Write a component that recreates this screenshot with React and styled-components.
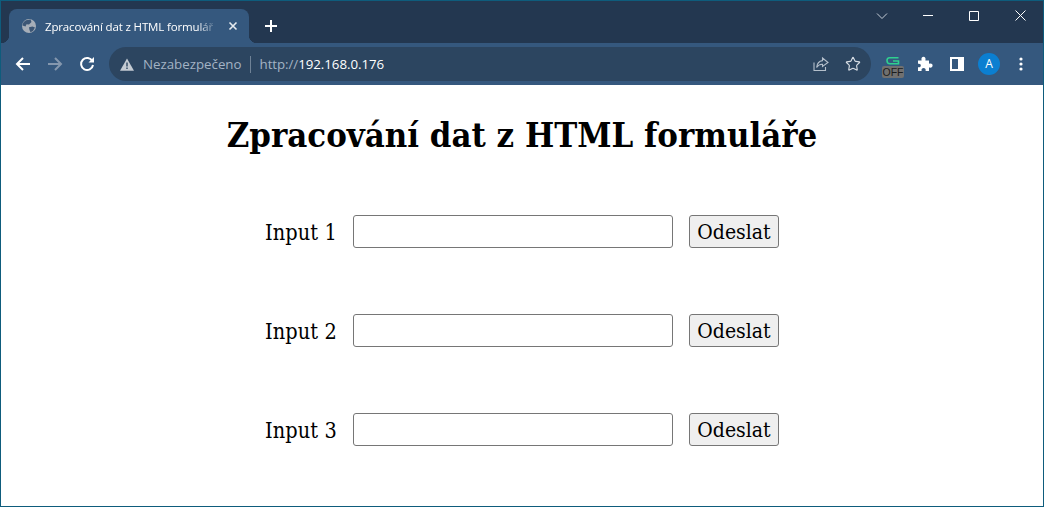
import React from "react";
import styled, { createGlobalStyle } from "styled-components";
import { Star } from "lucide-react";

const GlobalStyle = createGlobalStyle`
  html, body {
    margin: 0;
    padding: 0;
    background: #fff;
  }
`;

const Frame = styled.div`
  box-sizing: border-box;
  width: 1044px;
  height: 507px;
  border: 1px solid #0e5c7c;
  display: flex;
  flex-direction: column;
  overflow: hidden;
`;

const TitleBar = styled.div`
  height: 42px;
  flex: none;
  background: #233750;
  display: flex;
  align-items: flex-start;
  padding-left: 8px;
`;

const Tab = styled.div`
  position: relative;
  box-sizing: border-box;
  width: 240px;
  height: 34px;
  margin-top: 8px;
  background: #35587e;
  border-radius: 8px 8px 0 0;
  display: flex;
  align-items: center;
  padding: 0 9px 0 12px;
  gap: 8px;
  font-family: "Open Sans", "Noto Sans", sans-serif;
  font-size: 11.5px;
  letter-spacing: -0.15px;
  color: #fff;

  &::before,
  &::after {
    content: "";
    position: absolute;
    bottom: 0;
    width: 8px;
    height: 8px;
  }
  &::before {
    left: -8px;
    background: radial-gradient(circle at 0 0, #233750 8px, #35587e 8.5px);
  }
  &::after {
    right: -8px;
    background: radial-gradient(circle at 100% 0, #233750 8px, #35587e 8.5px);
  }
`;

const TabTitle = styled.span`
  flex: 1;
  min-width: 0;
  white-space: nowrap;
  overflow: hidden;
  -webkit-mask-image: linear-gradient(to right, #000 88%, transparent 100%);
  mask-image: linear-gradient(to right, #000 88%, transparent 100%);
`;

const NewTab = styled.div`
  width: 28px;
  height: 28px;
  margin: 11px 0 0 8px;
  display: flex;
  align-items: center;
  justify-content: center;
`;

const WindowControls = styled.div`
  margin-left: auto;
  display: flex;
`;

const WindowButton = styled.div`
  width: 46px;
  height: 29px;
  display: flex;
  align-items: center;
  justify-content: center;
`;

const Toolbar = styled.div`
  height: 42px;
  flex: none;
  background: #35587e;
  display: flex;
  align-items: center;
  padding: 0 6px;
  gap: 6px;
`;

const IconGroup = styled.div`
  display: flex;
  align-items: center;
`;

const IconButton = styled.div`
  position: relative;
  width: 32px;
  height: 32px;
  display: flex;
  align-items: center;
  justify-content: center;
`;

const Omnibox = styled.div`
  flex: 1;
  height: 34px;
  border-radius: 17px;
  background: #2c4560;
  display: flex;
  align-items: center;
  padding: 0 2px 0 11px;
  font-family: "Open Sans", "Noto Sans", sans-serif;
  font-size: 13.3px;
`;

const SecurityLabel = styled.span`
  color: #a3b3c4;
  margin-left: 9px;
  padding-right: 8px;
  border-right: 1px solid #6f8296;
  line-height: 17px;
`;

const Url = styled.span`
  margin-left: 9px;
  flex: 1;
  color: #fff;
  letter-spacing: -0.05px;
`;

const UrlScheme = styled.span`
  color: #a3b3c4;
`;

const GrammarlyMark = styled.svg`
  margin-top: -6px;
`;

const OffBadge = styled.span`
  position: absolute;
  left: 5px;
  top: 18px;
  width: 22px;
  height: 12px;
  border-radius: 2px;
  background: #707070;
  color: #1c1c1c;
  font-family: "Liberation Sans", sans-serif;
  font-size: 10.5px;
  line-height: 12px;
  text-align: center;
`;

const Avatar = styled.div`
  width: 22px;
  height: 22px;
  border-radius: 50%;
  background: #0b7fd1;
  color: #fff;
  font-family: "Open Sans", sans-serif;
  font-size: 12px;
  line-height: 22px;
  text-align: center;
`;

const Page = styled.main`
  flex: 1;
  background: #fff;
  color: #000;
  font-family: "DejaVu Serif", "Liberation Serif", serif;
  font-stretch: condensed;
`;

const Heading = styled.h1`
  margin: 0;
  height: 130px;
  box-sizing: border-box;
  padding-top: 29px;
  text-align: center;
  font-size: 34.4px;
  line-height: 42px;
  font-weight: 700;
`;

const Form = styled.form`
  display: flex;
  flex-direction: column;
  gap: 66px;
`;

const Row = styled.div`
  display: flex;
  justify-content: center;
  align-items: center;
  height: 33px;
`;

const Label = styled.label`
  width: 71px;
  margin-right: 17px;
  padding-top: 2px;
  font-size: 21.5px;
  letter-spacing: 0.1px;
  white-space: nowrap;
`;

const TextInput = styled.input`
  box-sizing: border-box;
  width: 320px;
  height: 33px;
  margin: 0 16px 0 0;
  border: 1px solid #767676;
  border-radius: 3px;
  background: #fff;
`;

const SubmitButton = styled.button`
  box-sizing: border-box;
  width: 90px;
  height: 33px;
  padding: 2px 0 0;
  border: 1px solid #767676;
  border-radius: 3px;
  background: #efefef;
  color: #000;
  font-family: "DejaVu Serif", "Liberation Serif", serif;
  font-stretch: condensed;
  font-size: 21px;
  line-height: 1;
`;

const Globe = () => (
  <svg width="16" height="16" viewBox="0 0 16 16">
    <circle cx="8" cy="8" r="7" fill="#a6aeb8" />
    <path d="M5 2.2 9.5 1.6 10.5 4 8 6.5 5.5 6.2 4.5 8.5 1.5 7.5C1.8 5 3 3.2 5 2.2Z" fill="#3c5675" />
    <path d="M8 9.2 11.5 8.5 14 9.5 12 13 9.5 14.3 8.5 12Z" fill="#3c5675" />
  </svg>
);

const Line = ({ d, w = 16, h = 16, color = "#fff", sw = 1.5 }) => (
  <svg width={w} height={h} viewBox={`0 0 ${w} ${h}`} fill="none" stroke={color} strokeWidth={sw}>
    <path d={d} />
  </svg>
);

const App = () => {
  const rows = ["Input 1", "Input 2", "Input 3"];
  return (
    <Frame>
      <GlobalStyle />
      <TitleBar>
        <Tab>
          <Globe />
          <TabTitle>Zpracování dat z HTML formulář</TabTitle>
          <Line d="M3.5 3.5 10.5 10.5M10.5 3.5 3.5 10.5" w={14} h={14} color="#e6ebf0" sw={1.6} />
        </Tab>
        <NewTab>
          <Line d="M7 1V13M1 7H13" w={14} h={14} sw={2} />
        </NewTab>
        <WindowControls>
          <WindowButton>
            <Line d="M1 1.5 6 6.5 11 1.5" w={12} h={8} color="#c6ced8" sw={1} />
          </WindowButton>
          <WindowButton>
            <Line d="M0 .5H10" w={10} h={1} sw={1} />
          </WindowButton>
          <WindowButton>
            <Line d="M.5.5H9.5V9.5H.5Z" w={10} h={10} sw={1} />
          </WindowButton>
          <WindowButton>
            <Line d="M.5.5 10.5 10.5M10.5.5 .5 10.5" w={11} h={11} sw={1} />
          </WindowButton>
        </WindowControls>
      </TitleBar>
      <Toolbar>
        <IconGroup>
          <IconButton>
            <Line d="M15 8H2M8 2 2 8 8 14" sw={2} />
          </IconButton>
          <IconButton>
            <Line d="M1 8H14M8 2 14 8 8 14" color="#8497ae" sw={2} />
          </IconButton>
          <IconButton>
            <svg width="16" height="16" viewBox="0 0 16 16" fill="none">
              <path d="M13.4 5.2A6 6 0 1 0 14 9" stroke="#fff" strokeWidth="2" />
              <path d="M9.5 6.5H15V1Z" fill="#fff" />
            </svg>
          </IconButton>
        </IconGroup>
        <Omnibox>
          <svg width="14" height="13" viewBox="0 0 14 13">
            <path d="M7 .5 14 12.8H0Z" fill="#c4cbd3" />
            <path d="M6.3 4.5H7.7V8.6H6.3ZM6.3 9.6H7.7V11H6.3Z" fill="#2c4560" />
          </svg>
          <SecurityLabel>Nezabezpečeno</SecurityLabel>
          <Url>
            <UrlScheme>http://</UrlScheme>192.168.0.176
          </Url>
          <IconButton>
            <svg width="16" height="16" viewBox="0 0 16 16" fill="none" stroke="#b4bfcb" strokeWidth="1.1">
              <path d="M1 6.5V14.5H12.5V11" />
              <path d="M9.5 2 15 6.5 9.5 10.5V8.2C7 8 5 9.2 3.6 11.5 4 7.8 6 5 9.5 4.6Z" />
            </svg>
          </IconButton>
          <IconButton>
            <Star size={16} color="#d7dde4" strokeWidth={1.7} />
          </IconButton>
        </Omnibox>
        <IconGroup>
          <IconButton>
            <GrammarlyMark width="14" height="8" viewBox="0 0 14 8" fill="none" stroke="#2fd08f" strokeWidth="1.6">
              <path d="M12.5 .8H3.5C1.5.8 1 2 1 3.5S2 6.8 4 6.8H12.5V4H7" />
            </GrammarlyMark>
            <OffBadge>OFF</OffBadge>
          </IconButton>
          <IconButton>
            <svg width="16" height="16" viewBox="0 0 16 16">
              <path d="M1 4.5H4.6C4 2 5 .8 6.5.8S9 2 8.4 4.5H12V7.8C14.5 7.2 15.6 8.2 15.6 9.6S14.5 12 12 11.5V15H8.6C9 12.8 8 12 6.6 12S4.2 12.8 4.6 15H1V11.2C3 11.6 3.8 10.6 3.8 9.4S3 7.4 1 7.8Z" fill="#fff" />
            </svg>
          </IconButton>
          <IconButton>
            <svg width="14" height="14" viewBox="0 0 14 14">
              <path d="M0 0H14V14H0ZM2 2V12H8V2Z" fill="#fff" fillRule="evenodd" />
            </svg>
          </IconButton>
          <IconButton>
            <Avatar>A</Avatar>
          </IconButton>
          <IconButton>
            <svg width="4" height="14" viewBox="0 0 4 14" fill="#fff">
              <circle cx="2" cy="2" r="1.6" />
              <circle cx="2" cy="7" r="1.6" />
              <circle cx="2" cy="12" r="1.6" />
            </svg>
          </IconButton>
        </IconGroup>
      </Toolbar>
      <Page>
        <Heading>Zpracování dat z HTML formuláře</Heading>
        <Form>
          {rows.map((name) => (
            <Row key={name}>
              <Label>{name}</Label>
              <TextInput type="text" />
              <SubmitButton type="button">Odeslat</SubmitButton>
            </Row>
          ))}
        </Form>
      </Page>
    </Frame>
  );
};

export default App;
